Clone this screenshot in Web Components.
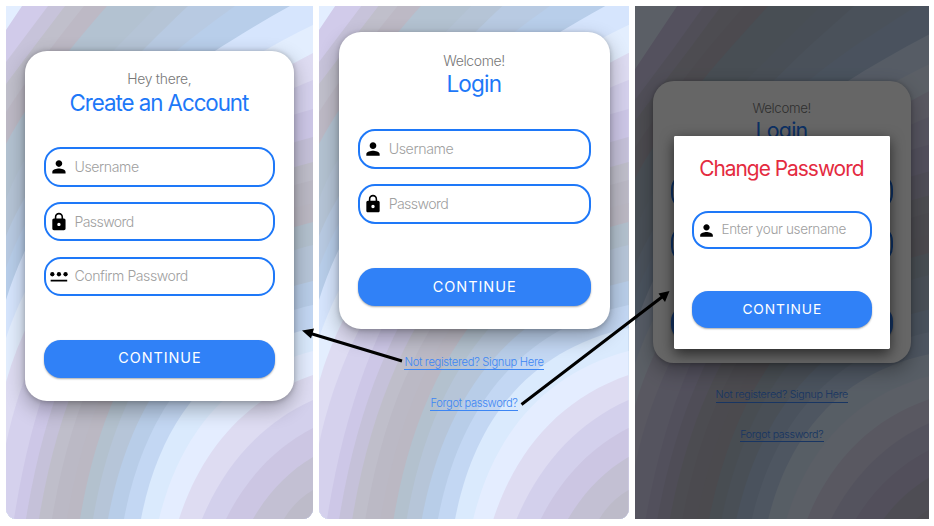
<!DOCTYPE html>
<html lang="en"><head><meta charset="utf-8"><title>Account screens</title>
<style>
body{margin:0;width:934px;height:526px;overflow:hidden;background:#fff;font-family:Inter,"Liberation Sans",sans-serif}
</style></head><body>
<auth-flow></auth-flow>
<script>
const define=(name,html,init)=>customElements.define(name,class extends HTMLElement{
  constructor(){super();this.attachShadow({mode:'open'}).innerHTML=html;}
  connectedCallback(){if(init)init(this,this.shadowRoot);}
});

/* One line of text tracked to a given width. */
const pen=document.createElement('canvas').getContext('2d');
define('tracked-text','<style>:host{display:block;white-space:nowrap;line-height:1;font-size:var(--s);font-weight:var(--wt,400);font-kerning:normal}span{display:block}</style><span><slot></slot></span>',(el,root)=>{
  const size=+el.getAttribute('size'),weight=el.getAttribute('weight')||'400',w=+el.getAttribute('width');
  el.style.setProperty('--s',size+'px');el.style.setProperty('--wt',weight);
  const t=el.textContent;
  pen.font=`${weight} ${size}px Inter`;
  const gap=(w-pen.measureText(t).width)/(t.length-1);
  const s=root.querySelector('span');
  s.style.letterSpacing=gap.toFixed(3)+'px';s.style.width=w+'px';
});

/* Striped wallpaper: each curve fills everything below and right of it. */
const stripes=[
 ['M6 30L22 6L50 -36','#d1cbea'],['M6 62Q24 38 48 6L78 -36','#c7c3da'],['M6 84Q30 52 65 6L96 -36','#c0bfcb'],
 ['M6 112Q34 68 84 6L120 -36','#bdb9c5'],['M6 144C30 98 68 50 107 6L145 -36','#b3c2d1'],
 ['M6 200C30 130 105 60 157 6L200 -36','#b5c4d6'],['M6 236C36 160 120 70 188 6L235 -36','#b8cae2'],
 ['M6 268C38 175 130 80 235 6L300 -36','#b8ceea'],['M6 300C40 190 120 100 290 6L370 -36','#d6e5fd'],
 ['M6 338C48 210 180 88 313 25','#e3eefe'],['M6 382C48 230 205 108 313 53','#dedcf2'],['M6 444C44 260 190 128 313 80','#d5d1ed']];
const arcs=[[14,109,'#cdc7e7'],[26,137,'#c5c1d9'],[39,162,'#bfbeca'],[52,180,'#bbb9c5'],[67,203,'#bbb8c3'],[80,222,'#b3c1ce'],[93,245,'#b6c5d8'],[108,281,'#b8cde8'],[124,305,'#c3d7f3'],[141,328,'#daeafd'],[159,351,'#e4edff',.9],[179,375,'#dedcf2',.75],[202,400,'#d3d0ec',.6],[226,428,'#ccc6e3',.5],[253,457,'#c3c0d3',.4],[284,490,'#bdbbc9',.4]];
const wall=stripes.map(([d,c])=>`<path fill="${c}" d="${d}H360V560H6Z"/>`).join('')+
 arcs.map(([x,y,c,k=1])=>{
  const h=519-y,w=313-x,mix=(bent,flat)=>bent*k+flat*(1-k);
  return `<path fill="${c}" d="M${x} 519C${x+w*mix(.11,.33)} ${519-h*mix(.52,.33)} ${x+w*mix(.43,.67)} ${y+h*mix(.11,.33)} 313 ${y}V519Z"/>`;
 }).join('');
define('wave-wallpaper','<style>:host{display:block}svg{display:block;width:100%;height:100%}</style><svg preserveAspectRatio="none"></svg>',(el,root)=>{
  const s=root.querySelector('svg');s.setAttribute('viewBox',el.getAttribute('view')||'6 6 307 513');
  s.innerHTML='<rect x="0" y="-40" width="330" height="570" fill="#e3eeff"/>'+wall;
});
customElements.get('wave-wallpaper').prototype.refresh=function(){this.shadowRoot.querySelector('svg').setAttribute('viewBox',this.getAttribute('view'));};

const icons={
 user:'<path d="M12 12c2.200 0 4-1.800 4-4s-1.800-4-4-4-4 1.800-4 4 1.800 4 4 4zm0 2c-2.700 0-8 1.300-8 4v2h16v-2c0-2.700-5.300-4-8-4z"/>',
 lock:'<path fill-rule="evenodd" d="M18 8h-1V6c0-2.800-2.200-5-5-5S7 3.200 7 6v2H6c-1.100 0-2 .9-2 2v10c0 1.100.9 2 2 2h12c1.100 0 2-.9 2-2V10c0-1.100-.9-2-2-2zm-6 9c-1.100 0-2-.9-2-2s.9-2 2-2 2 .9 2 2-.9 2-2 2zM8.900 8V6a3.100 3.100 0 0 1 6.200 0v2z"/>',
 pin:'<circle cx="4" cy="10" r="2.600"/><circle cx="12" cy="10" r="2.600"/><circle cx="20" cy="10" r="2.600"/><path d="M2 16.500h20v2.200H2z"/>'};
define('icon-field',`<style>:host{display:flex;align-items:center;box-sizing:border-box;height:39.500px;border:2.150px solid #1e78f8;border-radius:17px;padding:0 0 0 3px;gap:6px;background:#fff;color:#a0a0a0}svg{width:20px;height:20px;fill:#000;flex:none;overflow:visible}</style><svg viewBox="0 0 24 24"></svg><slot></slot>`,(el,root)=>{root.querySelector('svg').innerHTML=icons[el.getAttribute('icon')];});

define('pill-button',`<style>:host{display:flex;align-items:center;justify-content:center;height:38.500px;border-radius:17px;background:#3081f7;color:#fff;box-shadow:0 1px 2px #0005}</style><slot></slot>`);
const proceed='<tracked-text size="14.500" weight="370" width="83">CONTINUE</tracked-text>';

define('text-link',`<style>:host{display:block;width:max-content;color:#3c86f4;border-bottom:1.200px solid #3c86f4;padding-bottom:1px}</style><slot></slot>`);

define('form-card',`<style>:host{display:flex;flex-direction:column;box-sizing:border-box;width:271px;padding:0 19px;border-radius:22px;background:#fff;box-shadow:0 8px 20px #0000004d,0 1px 5px #00000038}
.head{display:flex;flex-direction:column;align-items:center;height:97px;box-sizing:border-box;padding-top:22.300px;gap:5px;color:#777}
.title{color:#1e78f8}.fields{display:flex;flex-direction:column;gap:15.500px}pill-button{margin-top:44px}</style>
<div class="head"><slot name="hello"></slot><div class="title"><slot name="title"></slot></div></div><div class="fields"><slot></slot></div><pill-button><slot name="action"></slot></pill-button>`);

define('reset-dialog',`<style>:host{display:flex;flex-direction:column;align-items:center;box-sizing:border-box;width:227px;height:224px;padding:24px 19px 0;background:#fff;border-radius:1.500px;box-shadow:0 5px 14px #0009;color:#e42b3f}icon-field,pill-button{width:100%}icon-field{margin-top:33px}pill-button{margin-top:44.500px}</style>
<tracked-text size="22" weight="430" width="174">Change Password</tracked-text>
<icon-field icon="user"><tracked-text size="14.200" weight="300" width="131">Enter your username</tracked-text></icon-field><pill-button>${proceed}</pill-button>`);

define('phone-screen',`<style>:host{display:grid;position:relative;overflow:hidden;flex:none}wave-wallpaper,.content{grid-area:1/1;min-height:0}.content{display:flex;flex-direction:column;align-items:center;position:relative}</style><wave-wallpaper></wave-wallpaper><div class="content"><slot></slot></div>`,(el,root)=>{
 root.querySelector('wave-wallpaper').setAttribute('view',el.getAttribute('view')||'6 6 307 513');
});

const action=proceed.replace('<tracked-text','<tracked-text slot="action"');
/* While a dialog covers the card, its button carries no label. */
const login=covered=>`<form-card><tracked-text slot="hello" size="14" weight="300" width="62">Welcome!</tracked-text><tracked-text slot="title" size="22.500" weight="430" width="55.500">Login</tracked-text>
<icon-field icon="user">${covered?'':'<tracked-text size="14.200" weight="300" width="65">Username</tracked-text>'}</icon-field><icon-field icon="lock">${covered?'':'<tracked-text size="14.200" weight="300" width="60">Password</tracked-text>'}</icon-field>${covered?'':action}</form-card>
<div class="links"><text-link><tracked-text size="11.200" weight="350" width="139.500">Not registered? Signup Here</tracked-text></text-link><text-link><tracked-text size="11.200" weight="350" width="87.500">Forgot password?</tracked-text></text-link></div>`;
define('auth-flow',`<style>:host{display:block;position:relative;width:934px;height:526px}
.row{display:flex;align-items:flex-start;padding:6px}
phone-screen{height:513px;border-radius:0 0 11px 11px}
.a{width:309px;height:516.400px;zoom:.9935;margin-right:6.500px}.b{width:309.500px;margin-right:6px}.c{width:309.100px;height:539.400px;zoom:.951;border-radius:0}
.a form-card{margin-top:45.300px;height:352.500px}.b form-card{margin-top:26px;height:297px}.c form-card{margin-top:78.500px;height:297px}
.links{display:flex;flex-direction:column;align-items:center;gap:28.500px;margin-top:27.500px}
.c .links{margin-top:28.500px}
.shade{position:absolute;inset:0;background:#0009}
reset-dialog{position:absolute;left:41px;top:137px}
.arrows{position:absolute;inset:0;width:934px;height:526px}</style>
<div class="row"><phone-screen class="a"><form-card><tracked-text slot="hello" size="14" weight="300" width="65">Hey there,</tracked-text><tracked-text slot="title" size="22.500" weight="430" width="181">Create an Account</tracked-text>
<icon-field icon="user"><tracked-text size="14.200" weight="300" width="65">Username</tracked-text></icon-field><icon-field icon="lock"><tracked-text size="14.200" weight="300" width="60">Password</tracked-text></icon-field><icon-field icon="pin"><tracked-text size="14.200" weight="300" width="114.500">Confirm Password</tracked-text></icon-field>${action}</form-card></phone-screen>
<phone-screen class="b">${login(false)}</phone-screen>
<phone-screen class="c" view="6 -36 307 536">${login(true)}<div class="shade"></div><reset-dialog></reset-dialog></phone-screen></div>
<svg class="arrows" viewBox="0 0 934 526"><path d="M402 361L309 333M521.500 404.500L662 297" stroke="#000" stroke-width="3" fill="none"/><path d="M302 330.500L314 328.500L311 338.500ZM669.500 291L658.500 293.500L665 302Z"/></svg>`);
document.querySelector('auth-flow').shadowRoot.querySelectorAll('phone-screen').forEach(p=>p.shadowRoot.querySelector('wave-wallpaper').refresh());
</script></body></html>
